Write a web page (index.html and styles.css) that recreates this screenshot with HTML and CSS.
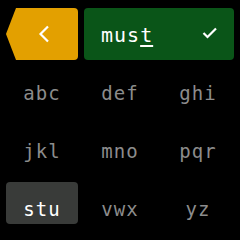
FILE: index.html
```html
<!DOCTYPE html>
<html lang="en">
<head>
    <meta charset="UTF-8">
    <meta name="viewport" content="width=device-width, initial-scale=1.0">
    <title>T9 input</title>
    <link rel="stylesheet" href="styles.css">
</head>
<body>
    <div class="screen">
        <div class="top-bar">
            <button class="back-button">
                <svg width="12" height="18" viewBox="0 0 12 18">
                    <path d="M10 1.5 L2.5 9 L10 16.5" fill="none" stroke="#fff" stroke-width="2.2"/>
                </svg>
            </button>
            <div class="word-box">
                <span class="word">mus<u>t</u></span>
                <svg class="check" width="16" height="12" viewBox="0 0 16 12">
                    <path d="M1.5 6 L5.5 10 L14 1.5" fill="none" stroke="#fff" stroke-width="2.2"/>
                </svg>
            </div>
        </div>

        <div class="keys">
            <div class="key">abc</div>
            <div class="key">def</div>
            <div class="key">ghi</div>
            <div class="key">jkl</div>
            <div class="key">mno</div>
            <div class="key">pqr</div>
            <div class="key selected">stu</div>
            <div class="key">vwx</div>
            <div class="key">yz</div>
        </div>
    </div>
</body>
</html>
```

FILE: styles.css
```css
body {
    margin: 0;
    background-color: #000000;
    font-family: "DejaVu Sans Mono", "Liberation Mono", monospace;
}

.screen {
    width: 240px;
    height: 240px;
    padding: 8px 6px 0;
    box-sizing: border-box;
}

.top-bar {
    display: flex;
    gap: 6px;
    height: 52px;
}

.back-button {
    width: 72px;
    border: none;
    padding: 0 0 0 3px;
    background-color: #e3a000; /* желтая кнопка назад */
    border-radius: 0 4px 4px 0;
    clip-path: polygon(10px 0, 100% 0, 100% 100%, 10px 100%, 0 50%);
    display: flex;
    justify-content: center;
    align-items: center;
}

.word-box {
    flex: 1;
    background-color: #0a5518; /* зеленая плашка слова */
    border-radius: 4px;
    display: flex;
    align-items: center;
    justify-content: space-between;
    padding: 0 16px 0 17px;
    color: #ffffff;
}

.word {
    font-size: 20px;
    letter-spacing: 1px;
    padding-top: 2px;
}

.word u {
    text-decoration-thickness: 2px;
    text-underline-offset: 3px;
}

.check {
    margin-bottom: 3px;
}

.keys {
    display: grid;
    grid-template-columns: repeat(3, 1fr);
    grid-auto-rows: 42px;
    column-gap: 6px;
    row-gap: 16px;
    margin-top: 6px;
}

.key {
    display: flex;
    justify-content: center;
    align-items: center;
    padding-top: 12px;
    font-size: 19px;
    letter-spacing: 1px;
    color: #8c8c8c;
    border-radius: 4px;
}

.key.selected {
    background-color: #393b39;
    color: #ffffff;
}
```
